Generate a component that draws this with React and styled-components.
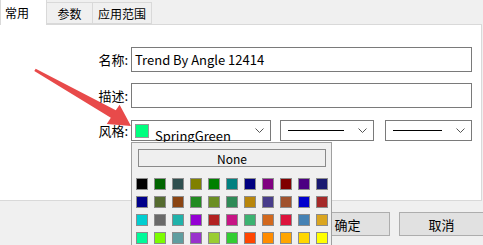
import React from 'react';
import styled, { createGlobalStyle } from 'styled-components';

const GlobalStyle = createGlobalStyle`
  html, body { margin: 0; padding: 0; }
  body {
    font-family: "Noto Sans CJK SC", "Noto Sans", "Liberation Sans", sans-serif;
    background: #f0f0f0;
    color: #000;
  }
`;

const Window = styled.div`
  position: relative;
  width: 483px;
  height: 245px;
  overflow: hidden;
  background: #f0f0f0;
  display: flex;
  flex-direction: column;
`;

const TabBar = styled.div`
  height: 25px;
  display: flex;
  align-items: flex-end;
  border-bottom: 1px solid #d9d9d9;
  width: 482px;
  box-sizing: border-box;
`;

const Tab = styled.div`
  box-sizing: border-box;
  width: ${p => p.w}px;
  height: ${p => (p.active ? 26 : 22)}px;
  margin-bottom: ${p => (p.active ? -1 : 0)}px;
  background: ${p => (p.active ? '#fff' : '#f0f0f0')};
  border: 1px solid #d9d9d9;
  border-bottom: ${p => (p.active ? 'none' : '1px solid #d9d9d9')};
  border-left: ${p => (p.first ? '1px solid #d9d9d9' : 'none')};
  font-size: 12px;
  display: flex;
  align-items: center;
  justify-content: ${p => (p.active ? 'flex-start' : 'center')};
  padding-left: ${p => (p.active ? 4 : 0)}px;
  padding-top: ${p => (p.active ? 0 : 1)}px;
`;

const Panel = styled.div`
  box-sizing: border-box;
  width: 482px;
  height: 176px;
  background: #fff;
  border-right: 1px solid #d9d9d9;
  border-bottom: 1px solid #d9d9d9;
  padding-top: 22px;
  display: grid;
  grid-template-columns: 128px 341px;
  column-gap: 3px;
  row-gap: 11px;
  align-content: start;
`;

const Label = styled.div`
  font-size: 13px;
  text-align: right;
  display: flex;
  align-items: center;
  justify-content: flex-end;
  height: ${p => p.h}px;
  margin-top: ${p => p.mt || 0}px;
`;

const TextBox = styled.div`
  box-sizing: border-box;
  height: 25px;
  border: 1px solid #7a7a7a;
  background: #fff;
  font-size: 13px;
  padding-left: 3px;
  display: flex;
  align-items: center;
`;

const StyleRow = styled.div`
  display: flex;
  margin-top: 1px;
  gap: 9px;
`;

const Combo = styled.div`
  box-sizing: border-box;
  width: ${p => p.w}px;
  height: 21px;
  margin-left: ${p => p.ml || 0}px;
  border: 1px solid #7a7a7a;
  background: #fff;
  display: flex;
  align-items: center;
  padding: 0 6px 0 3px;
  font-size: 13px;
`;

const Swatch = styled.span`
  box-sizing: border-box;
  width: 14px;
  height: 14px;
  background: ${p => p.c};
  border: 1px solid #999;
  flex: none;
`;

const ComboText = styled.span`
  margin-left: 6px;
  flex: 1;
  line-height: 21px;
  padding-top: 9px;
  white-space: nowrap;
`;

const LineSample = styled.span`
  flex: 1;
  height: 1px;
  background: #000;
  margin: 0 14px 0 4px;
`;

const Chevron = () => (
  <svg width="9" height="6" viewBox="0 0 9 6" style={{ flex: 'none' }}>
    <path d="M0.5 0.5 L4.5 4.5 L8.5 0.5" fill="none" stroke="#555" strokeWidth="1" />
  </svg>
);

const Footer = styled.div`
  flex: 1;
  display: flex;
  justify-content: flex-end;
  align-items: flex-start;
  padding-top: 11px;
  margin-right: -1px;
  gap: 9px;
`;

const Button = styled.div`
  box-sizing: border-box;
  width: ${p => p.w}px;
  height: 24px;
  background: #e1e1e1;
  border: 1px solid #adadad;
  font-size: 13px;
  display: flex;
  align-items: center;
  justify-content: center;
`;

const Popup = styled.div`
  position: absolute;
  left: 131px;
  top: 142px;
  width: 201px;
  height: 110px;
  box-sizing: border-box;
  background: #f0f0f0;
  border: 1px solid #a0a0a0;
  padding: 6px 0 0 6px;
`;

const NoneButton = styled.div`
  box-sizing: border-box;
  width: 188px;
  height: 18px;
  border: 1px solid #8a8a8a;
  background: #efefef;
  font-size: 12px;
  display: flex;
  align-items: center;
  justify-content: center;
`;

const ColorGrid = styled.div`
  display: grid;
  grid-template-columns: repeat(11, 12px);
  grid-auto-rows: 12px;
  column-gap: 6px;
  row-gap: 6px;
  margin: 11px 0 0 -2px;
`;

const Cell = styled.div`
  box-sizing: border-box;
  background: ${p => p.c};
  border: 1px solid #8c8c8c;
`;

const Arrow = styled.svg`
  position: absolute;
  left: 0;
  top: 0;
  pointer-events: none;
`;

const colors = [
  '#000000', '#006400', '#2f4f4f', '#808000', '#008000', '#008080', '#000080', '#800080', '#800000', '#4b0082', '#191970',
  '#00008b', '#556b2f', '#8b4513', '#228b22', '#6b8e23', '#2e8b57', '#b8860b', '#483d8b', '#a0522d', '#0000cd', '#a52a2a',
  '#00ced1', '#696969', '#20b2aa', '#9400d3', '#b22222', '#c71585', '#3cb371', '#d2691e', '#dc143c', '#4682b4', '#daa520',
  '#00fa9a', '#7cfc00', '#5f9ea0', '#9932cc', '#9acd32', '#32cd32', '#ff4500', '#ff8c00', '#ffa500', '#ffd700', '#ffff00',
];

export default function App() {
  return (
    <>
      <GlobalStyle />
      <Window>
        <TabBar>
          <Tab active first w={47}>常用</Tab>
          <Tab w={46}>参数</Tab>
          <Tab w={59}>应用范围</Tab>
        </TabBar>
        <Panel>
          <Label h={25}>名称:</Label>
          <TextBox>Trend By Angle 12414</TextBox>
          <Label h={25}>描述:</Label>
          <TextBox />
          <Label h={21} mt={1}>风格:</Label>
          <StyleRow>
            <Combo w={140}>
              <Swatch c="#00ff7f" />
              <ComboText>SpringGreen</ComboText>
              <Chevron />
            </Combo>
            <Combo w={95}>
              <LineSample />
              <Chevron />
            </Combo>
            <Combo w={87} ml={2}>
              <LineSample />
              <Chevron />
            </Combo>
          </StyleRow>
        </Panel>
        <Footer>
          <Button w={85}>确定</Button>
          <Button w={85}>取消</Button>
        </Footer>
        <Popup>
          <NoneButton>None</NoneButton>
          <ColorGrid>
            {colors.map((c, i) => <Cell key={i} c={c} />)}
          </ColorGrid>
        </Popup>
        <Arrow width="483" height="245" viewBox="0 0 483 245">
          <polygon
            points="34.3,71 35.7,68.8 115.8,110.2 119.6,104.8 131,126 106.8,124 110.8,117.8"
            fill="#e84a4a"
          />
        </Arrow>
      </Window>
    </>
  );
}
